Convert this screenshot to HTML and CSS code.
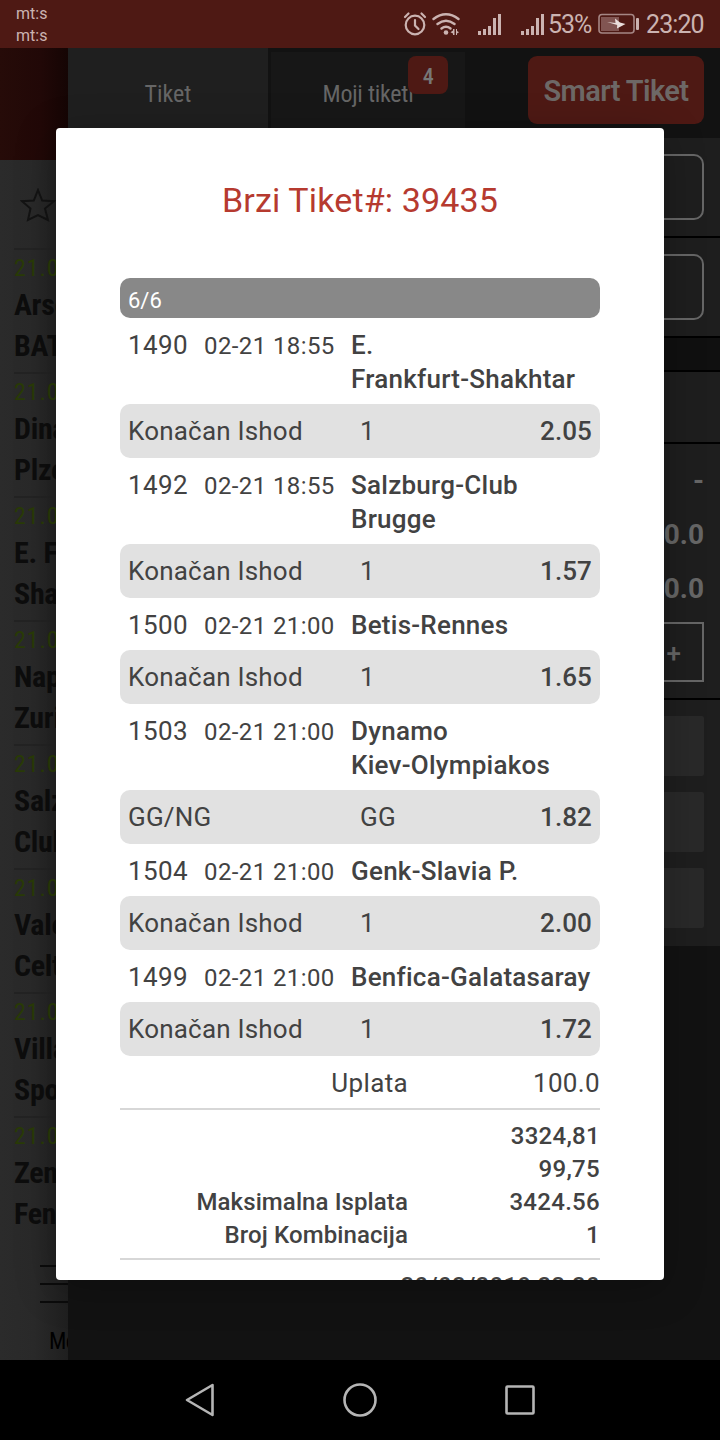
FILE: index.html
```
<!DOCTYPE html>
<html lang="sr">
<head>
<meta charset="utf-8">
<title>Brzi Tiket</title>
<link rel="stylesheet" href="styles.css">
</head>
<body>
<header class="status">
  <div class="carriers"><span>mt:s</span><span>mt:s</span></div>
  <svg class="status-icons" width="146" height="48" viewBox="0 0 146 48" fill="none" stroke="#cbb3b1" stroke-width="2.2" stroke-linecap="round">
    <circle cx="15" cy="25" r="9.3"/><path d="M15 20v5.500l3.500 3.500M5 17l3.500-3.500M25 17l-3.500-3.500"/>
    <path stroke-width="2.500" d="M33.500 19q12.500-9.500 25 0M37.500 24q8.500-6.500 17 0M41.500 28.500q4.500-3.500 9 0"/>
    <g fill="#cbb3b1" stroke="none"><circle cx="46" cy="32.500" r="2.300"/><path d="M53 29h1.500v6H53v-1.500L50.500 32.200 53 30.500zM56 29h1v2l2 1.200-2 1.300v1.500h-1z"/></g>
    <g stroke-width="3" stroke-linecap="butt"><path d="M79.500 31v4M84.500 29v6M89.500 26v9M94.500 18v17M99.500 14v21M122.500 31v4M127.500 29v6M132.500 26v9M137.500 18v17M142.500 14v21"/></g>
  </svg>
  <span class="percent">53%</span>
  <svg class="battery" width="42" height="22" viewBox="0 0 42 22"><rect x="1" y="1.500" width="35" height="18.500" rx="3" fill="none" stroke="#a58684" stroke-width="1.600"/><path d="M3 4h18v14H3z" fill="#815552"/><rect x="38" y="5" width="3" height="12" rx="1" fill="#cbb3b1"/><path d="M9 9l8.500 1-.5-4.500 5 4 5.500 1.500-8.500 4.500.2-3.500z" fill="#eadfdd"/></svg>
  <span class="clock">23:20</span>
</header>
<div class="app">
  <aside class="list">
    <div class="brand"></div>
    <div class="star"><svg width="36" height="34" viewBox="0 0 36 34" fill="none" stroke="#131313" stroke-width="2"><path d="M18 2l4.200 10.500L34 13.200l-9 7.300L28 32l-10-5-10 5 2.500-11.500L2 13.200l11.800-.7z"/></svg></div>
    <div class="game"><i>21.02</i><b>Arsenal</b><b>BATE</b></div>
    <div class="game"><i>21.02</i><b>Dinamo</b><b>Plzen</b></div>
    <div class="game"><i>21.02</i><b>E. Frankfurt</b><b>Shakhtar</b></div>
    <div class="game"><i>21.02</i><b>Napoli</b><b>Zurich</b></div>
    <div class="game"><i>21.02</i><b>Salzburg</b><b>Club</b></div>
    <div class="game"><i>21.02</i><b>Valencia</b><b>Celtic</b></div>
    <div class="game"><i>21.02</i><b>Villarreal</b><b>Sporting</b></div>
    <div class="game"><i>21.02</i><b>Zenit</b><b>Fenerbahce</b></div>
    <div class="menu"><span class="burger"></span><span class="menu-label">Meni</span></div>
  </aside>
  <main class="ticket">
    <nav class="tabs">
      <div class="tab active"><span>Tiket</span></div>
      <div class="tab"><span>Moji tiketi</span><em class="badge">4</em></div>
      <div class="smart">Smart Tiket</div>
    </nav>
    <section class="field"><div></div></section>
    <section class="field"><div></div></section>
    <section class="band"></section>
    <section class="blank"></section>
    <section class="totals"><p>-</p><p>0.0</p><p>0.0</p><div class="stepper">+</div></section>
    <section class="buttons"><div></div><div></div><div></div></section>
  </main>
</div>
<footer class="nav">
  <svg width="40" height="40" viewBox="0 0 40 40"><path d="M7 20L32.500 5v30z"/></svg>
  <svg width="40" height="40" viewBox="0 0 40 40"><circle cx="20" cy="20" r="15.500"/></svg>
  <svg width="40" height="40" viewBox="0 0 40 40"><rect x="6.500" y="6.500" width="27" height="27" rx="1"/></svg>
</footer>
<div class="modal">
  <h1><span>Brzi Tiket#: 39435</span></h1>
  <div class="count"><span>6/6</span></div>
  <div class="match"><span class="id">1490</span><span class="date">02-21 18:55</span><b>E.<br>Frankfurt-Shakhtar</b></div>
  <div class="bet"><span>Konačan Ishod</span><span>1</span><b>2.05</b></div>
  <div class="match"><span class="id">1492</span><span class="date">02-21 18:55</span><b>Salzburg-Club<br>Brugge</b></div>
  <div class="bet"><span>Konačan Ishod</span><span>1</span><b>1.57</b></div>
  <div class="match"><span class="id">1500</span><span class="date">02-21 21:00</span><b>Betis-Rennes</b></div>
  <div class="bet"><span>Konačan Ishod</span><span>1</span><b>1.65</b></div>
  <div class="match"><span class="id">1503</span><span class="date">02-21 21:00</span><b>Dynamo<br>Kiev-Olympiakos</b></div>
  <div class="bet"><span>GG/NG</span><span>GG</span><b>1.82</b></div>
  <div class="match"><span class="id">1504</span><span class="date">02-21 21:00</span><b>Genk-Slavia P.</b></div>
  <div class="bet"><span>Konačan Ishod</span><span>1</span><b>2.00</b></div>
  <div class="match"><span class="id">1499</span><span class="date">02-21 21:00</span><b>Benfica-Galatasaray</b></div>
  <div class="bet"><span>Konačan Ishod</span><span>1</span><b>1.72</b></div>
  <div class="stake"><span>Uplata</span><span>100.0</span></div>
  <div class="sums">
    <span></span><span>3324,81</span>
    <span></span><span>99,75</span>
    <span>Maksimalna Isplata</span><span>3424.56</span>
    <span>Broj Kombinacija</span><span>1</span>
  </div>
  <div class="issued">20/02/2019 23:20</div>
</div>
</body>
</html>
```
FILE: styles.css
```
* { box-sizing: border-box; }
body { margin: 0; width: 720px; height: 1440px; overflow: hidden; position: relative; display: flex; flex-direction: column; background: #000; font-family: Roboto, sans-serif; }
i, em { font-style: normal; }
.status { height: 48px; background: #4e1914; color: #cbb3b1; display: flex; align-items: center; flex: none; }
.carriers { width: 400px; padding-left: 16px; display: flex; flex-direction: column; font-size: 16px; line-height: 22px; padding-top: 2px; }
.status-icons { flex: none; }
.percent { width: 52px; font-size: 25px; margin-left: 2px; letter-spacing: -1.1px; line-height: 48px; padding-top: 2px; }
.battery { margin-left: -2px; }
.clock { margin-left: 6px; font-size: 25px; line-height: 48px; padding-top: 2px; letter-spacing: -.9px; }
.app { height: 1312px; display: flex; flex: none; }
.list { width: 68px; overflow: hidden; background: linear-gradient(90deg, #2b2b2b 0, #292929 50%, #1f1f1f 100%); display: flex; flex-direction: column; }
.brand { height: 112px; background: linear-gradient(90deg, #260b08, #210807 60%, #150504); flex: none; }
.star { height: 88px; padding: 28px 0 0 20px; flex: none; }
.game { height: 124px; flex: none; margin-left: 14px; border-top: 2px solid #232323; display: flex; flex-direction: column; white-space: nowrap; }
.game i { font-family: "Roboto Condensed", Roboto, sans-serif; font-size: 24px; line-height: 36px; height: 34px; color: #293b07; letter-spacing: .9px; }
.game b { font-family: "Roboto Condensed", Roboto, sans-serif; font-size: 30px; line-height: 41px; color: #0d0d0d; letter-spacing: -.3px; }
.menu { padding: 25px 0 0 40px; display: flex; flex-direction: column; gap: 25px; }
.burger { width: 40px; height: 38px; border: solid #0b0b0b; border-width: 2px 0; background: linear-gradient(#0b0b0b, #0b0b0b) 0 16px / 100% 2px no-repeat; }
.menu-label { font-family: "Roboto Condensed", Roboto, sans-serif; font-size: 23px; font-weight: 400; letter-spacing: -.5px; line-height: 28px; padding-left: 9px; color: #000; }
.ticket { width: 652px; background: #121212; color: #666; }
.tabs { height: 90px; display: flex; }
.tab { position: relative; background: #171717; width: 194px; height: 86px; margin-top: 4px; margin-left: 3px; display: flex; justify-content: center; font-family: "Roboto Condensed", Roboto, sans-serif; font-size: 24px; line-height: 28px; padding-top: 28px; white-space: nowrap; letter-spacing: -.25px; }
.tab.active { background: #1f1f1f; width: 200px; height: 90px; margin: 0; padding-top: 32px; letter-spacing: 0; }
.badge { position: absolute; left: 137px; top: 4px; width: 40px; height: 38px; border-radius: 8px; background: #4e1914; text-align: center; font-size: 22px; line-height: 41px; color: #777; font-weight: 500; }
.smart { width: 176px; height: 68px; margin: 8px 0 0 63px; border-radius: 9px; background: #4e1914; color: #6d6866; font-weight: 600; font-size: 29px; letter-spacing: -.6px; line-height: 71px; text-align: center; white-space: nowrap; }
.field { height: 100px; background: #1e1e1e; border-bottom: 2px solid #000; padding: 16px; }
.field div { height: 66px; border: 2px solid #666; border-radius: 10px; }
.band { height: 34px; background: #101010; border-bottom: 2px solid #000; }
.blank { height: 72px; background: #1e1e1e; border-bottom: 2px solid #000; }
.totals { height: 256px; background: #1e1e1e; border-bottom: 2px solid #000; padding: 10px 16px 0; text-align: right; font-weight: 700; font-size: 28px; }
.totals p { margin: 0; height: 54px; line-height: 54px; }
.stepper { margin-top: 6px; height: 60px; border: 2px solid #666; line-height: 58px; font-size: 26px; font-weight: 500; padding-right: 21px; }
.buttons { height: 246px; background: #1e1e1e; padding: 16px; display: flex; flex-direction: column; gap: 16px; }
.buttons div { height: 60px; background: #292929; border-radius: 2px; }
.nav { height: 80px; flex: none; background: #000; display: flex; justify-content: center; align-items: center; gap: 120px; }
.nav svg { fill: none; stroke: #b5b5b5; stroke-width: 2.6; stroke-linejoin: round; }
.modal { position: absolute; left: 56px; top: 128px; width: 608px; height: 1152px; background: #fff; border-radius: 4px; padding: 0 64px; overflow: hidden; box-shadow: 0 8px 40px rgba(0,0,0,.25); color: #424242; white-space: nowrap; }
h1 { margin: 0; height: 150px; padding-top: 48px; font-size: 34px; letter-spacing: .15px; line-height: 48px; font-weight: 400; color: #b63a2f; text-align: center; }
.count { height: 40px; border-radius: 10px; background: #888; color: #fff; font-size: 22px; line-height: 45px; padding-left: 8px; letter-spacing: 0; }
.match { padding: 10px 0 8px 8px; display: grid; grid-template-columns: 76px 147px 1fr; font-size: 26px; line-height: 34px; letter-spacing: .25px; }
.match .id { letter-spacing: .4px; }
.match .date { font-size: 24px; line-height: 36px; height: 34px; letter-spacing: .4px; }
.match b, .bet b { font-weight: 500; }
.bet { height: 54px; border-radius: 10px; background: #e1e1e1; padding: 0 8px; display: grid; grid-template-columns: 232px 90px 1fr; font-size: 26px; line-height: 54px; letter-spacing: .2px; }
.bet b { text-align: right; letter-spacing: .1px; }
.stake, .sums { display: grid; grid-template-columns: 288px 192px; text-align: right; border-bottom: 2px solid #d7d7d7; }
.stake { height: 54px; font-size: 26px; line-height: 54px; letter-spacing: .35px; }
.sums { height: 150px; padding-top: 9px; grid-auto-rows: 33px; font-size: 24px; line-height: 34px; font-weight: 500; letter-spacing: .1px; }
.sums span:nth-child(even) { letter-spacing: .3px; }
.issued { text-align: right; font-size: 24px; line-height: 28px; padding-top: 12px; font-weight: 500; letter-spacing: .3px; }
```
